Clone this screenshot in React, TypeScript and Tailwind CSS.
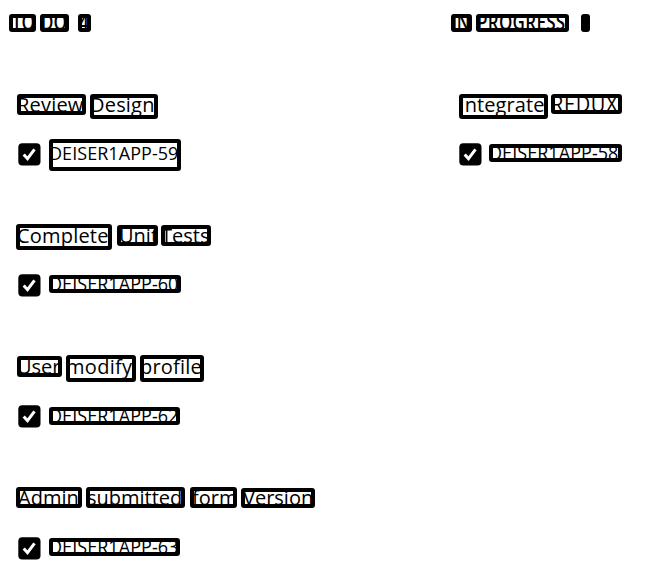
type WordProps = { text: string; box: string; ink: string };

function Word({ text, box, ink }: WordProps) {
  return (
    <span className={`block shrink-0 rounded-[3px] border-4 border-black ${box}`}>
      <span className={`block w-max whitespace-nowrap leading-none ${ink}`}>{text}</span>
    </span>
  );
}

type CardProps = { title: WordProps[]; issue: WordProps; check?: string };

function Card({ title, issue, check = "mt-[4px]" }: CardProps) {
  return (
    <article className="h-[131px]">
      <h2 className="flex h-[45px] items-start text-[20px]">
        {title.map((word) => (
          <Word key={word.text} {...word} />
        ))}
      </h2>
      <div className="flex items-start text-[18px] tracking-[0.05px]">
        <svg className={`ml-[9px] h-[23px] w-[23px] shrink-0 ${check}`} viewBox="0 0 23 23" fill="none">
          <rect x="0.3" y="0.3" width="22.2" height="22.2" rx="4" fill="black" />
          <path d="M5.7 11.4 9.5 15.7 16.5 6.3" stroke="white" strokeWidth="3" />
        </svg>
        <Word {...issue} />
      </div>
    </article>
  );
}

const todo: CardProps[] = [
  {
    title: [
      { text: "Review", box: "ml-[8px] h-[21px] w-[69px]", ink: "-ml-[4px] -mt-[3px] tracking-[0.2px]" },
      { text: "Design", box: "ml-[4px] h-[25px] w-[68px]", ink: "-ml-[4px] -mt-[3px] tracking-[0.2px]" },
    ],
    issue: { text: "DEISER1APP-59", box: "ml-[8px] h-[32px] w-[132px]", ink: "-ml-[4px] mt-[1px]" },
  },
  {
    title: [
      { text: "Complete", box: "ml-[7px] -mt-px h-[26px] w-[96px]", ink: "-ml-[3px] -mt-[2px] tracking-[0.2px]" },
      { text: "Unit", box: "ml-[5px] h-[21px] w-[41px]", ink: "-ml-[2px] -mt-[3px]" },
      { text: "Tests", box: "ml-[3px] h-[21px] w-[50px]", ink: "-ml-[4px] -mt-[3px]" },
    ],
    issue: { text: "DEISER1APP-60", box: "ml-[8px] mt-[5px] h-[18px] w-[132px]", ink: "-ml-[4px] -mt-[5px] scale-y-[1.14]" },
  },
  {
    title: [
      { text: "User", box: "ml-[8px] h-[21px] w-[45px]", ink: "-ml-[4px] -mt-[3px]" },
      { text: "modify", box: "ml-[4px] -mt-px h-[27px] w-[70px]", ink: "-ml-[4px] -mt-[2px] tracking-[0.3px]" },
      { text: "profile", box: "ml-[4px] -mt-px h-[27px] w-[64px]", ink: "-ml-[4px] -mt-[2px] tracking-[0.2px]" },
    ],
    issue: { text: "DEISER1APP-62", box: "ml-[8px] mt-[6px] h-[18px] w-[131px]", ink: "-ml-[4px] -mt-[5px] scale-y-[1.14]" },
  },
  {
    title: [
      { text: "Admin", box: "ml-[7px] h-[21px] w-[66px]", ink: "-ml-[2px] -mt-[3px]" },
      { text: "submitted", box: "ml-[4px] h-[21px] w-[99px]", ink: "-ml-[3px] -mt-[3px]" },
      { text: "form", box: "ml-[5px] h-[21px] w-[47px]", ink: "-ml-[2px] -mt-[3px]" },
      { text: "Version", box: "ml-[4px] mt-px h-[20px] w-[74px]", ink: "-ml-[2px] -mt-[4px]" },
    ],
    issue: { text: "DEISER1APP-63", box: "ml-[8px] mt-[6px] h-[18px] w-[131px]", ink: "-ml-[4px] -mt-[5px] scale-y-[1.14]" },
    check: "mt-[5px]",
  },
];

const inProgress: CardProps = {
  title: [
    { text: "Integrate", box: "ml-[9px] h-[25px] w-[89px]", ink: "-ml-[4px] -mt-[3px] tracking-[0.1px]" },
    { text: "REDUX", box: "ml-[3px] h-[20px] w-[71px]", ink: "-ml-[4px] -mt-[4px] tracking-[0.6px] scale-y-[1.1]" },
  ],
  issue: { text: "DEISER1APP-58", box: "ml-[7px] mt-[5px] h-[18px] w-[133px]", ink: "-ml-[4px] -mt-[5px] scale-y-[1.14]" },
};

export default function App() {
  return (
    <main className="flex h-[565px] w-[645px] items-start overflow-hidden bg-white pl-[9px] pt-[14px] font-['Open_Sans','Noto_Sans',sans-serif] text-black">
      <section className="w-[441px] shrink-0">
        <header className="flex h-[80px] items-start text-[17px] font-semibold">
          <Word text="TO" box="h-[18px] w-[27px]" ink="-ml-[1px] -mt-[5px] scale-y-[1.3]" />
          <Word text="DO" box="ml-[4px] h-[18px] w-[29px]" ink="-ml-[3px] -mt-[5px] scale-y-[1.3]" />
          <Word text="4" box="ml-[9px] h-[18px] w-[13px]" ink="-ml-[3px] -mt-[5px] scale-y-[1.3]" />
        </header>
        {todo.map((card) => (
          <Card key={card.issue.text} {...card} />
        ))}
      </section>
      <section className="shrink-0">
        <header className="flex h-[80px] items-start pl-px text-[17px] font-semibold">
          <Word text="IN" box="h-[18px] w-[21px]" ink="-ml-[3px] -mt-[5px] tracking-[-0.5px] scale-y-[1.3]" />
          <Word text="PROGRESS" box="ml-[4px] h-[18px] w-[93px]" ink="-ml-[3px] -mt-[5px] tracking-[0.3px] scale-y-[1.3]" />
          <Word text="1" box="ml-[12px] h-[18px] w-[9px] bg-black" ink="-ml-[4px] -mt-[4px]" />
        </header>
        <Card {...inProgress} />
      </section>
    </main>
  );
}
